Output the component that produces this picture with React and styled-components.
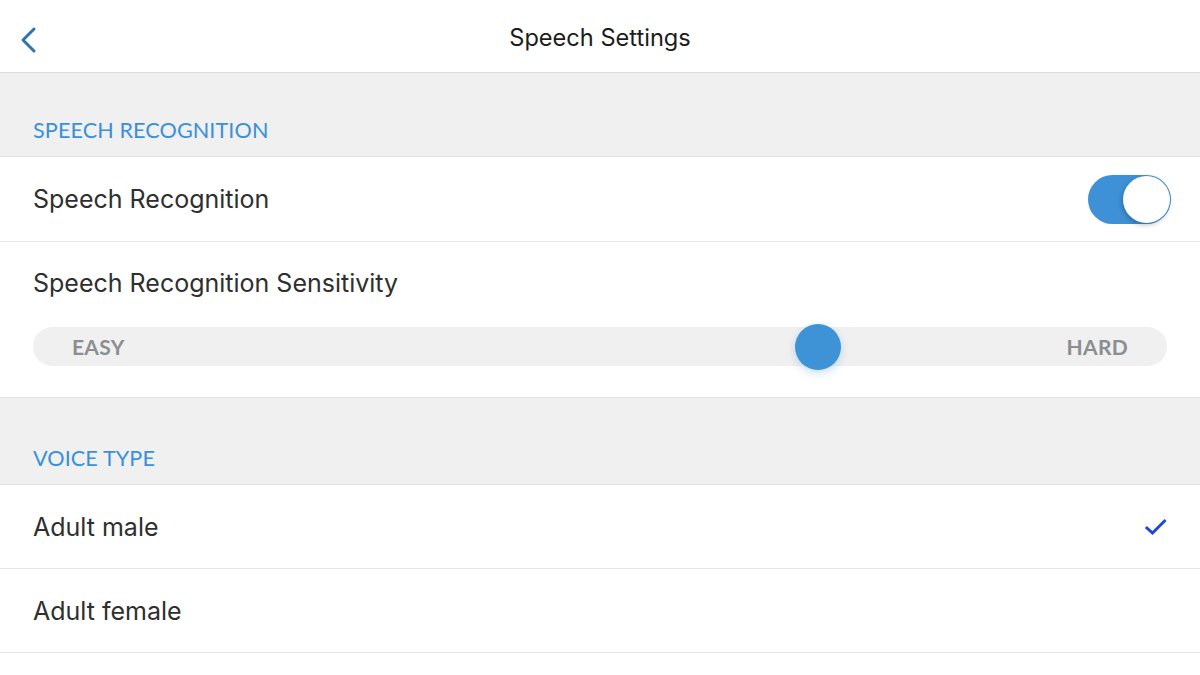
import React from "react";
import styled, { createGlobalStyle } from "styled-components";

const GlobalStyle = createGlobalStyle`
  html, body {
    margin: 0;
    padding: 0;
    background: #ffffff;
    font-family: Inter, "Open Sans", sans-serif;
  }
`;

const Page = styled.div`
  width: 1200px;
  height: 675px;
  background: #ffffff;
  overflow: hidden;
`;

const Header = styled.header`
  height: 73px;
  box-sizing: border-box;
  display: flex;
  align-items: center;
  justify-content: center;
  position: relative;
  border-bottom: 1px solid #dcdcdc;
  h1 {
    margin: 3px 0 0;
    font-size: 23.6px;
    font-weight: 400;
    color: #1c1c1c;
  }
`;

const BackButton = styled.button`
  position: absolute;
  left: 14px;
  top: 24px;
  width: 28px;
  height: 32px;
  padding: 0;
  border: none;
  background: none;
  display: flex;
  align-items: center;
  justify-content: center;
  cursor: pointer;
`;

const SectionHeader = styled.div`
  height: ${(p) => p.$height || 84}px;
  background: #f0f0f0;
  display: flex;
  align-items: flex-end;
  padding: 0 0 15px 33px;
  box-sizing: border-box;
  border-bottom: 1px solid #e2e2e2;
  font-family: Lato, "Open Sans", sans-serif;
  font-size: 21.6px;
  line-height: 22px;
  color: #3a91d8;
  letter-spacing: 0.1px;
`;

const Row = styled.div`
  height: ${(p) => p.$height || 84}px;
  display: flex;
  align-items: center;
  justify-content: space-between;
  padding: 0 30px 0 33px;
  box-sizing: border-box;
  border-bottom: 1px solid #e6e6e6;
  font-size: 25px;
  line-height: 28px;
  color: #2f2f2f;
`;

const SliderBlock = styled.div`
  height: 156px;
  box-sizing: border-box;
  padding: 27px 33px 0;
  border-bottom: 1px solid #e2e2e2;
  font-size: 25px;
  line-height: 28px;
  color: #2f2f2f;
`;

const Track = styled.div`
  margin-top: 30px;
  height: 39px;
  border-radius: 20px;
  background: #f0f0f0;
  display: flex;
  align-items: center;
  justify-content: space-between;
  padding: 0 39px;
  position: relative;
  font-family: Lato, "Open Sans", sans-serif;
  font-weight: 700;
  font-size: 21px;
  color: #8b8e92;
  letter-spacing: 0.3px;
`;

const Thumb = styled.div`
  position: absolute;
  top: 50%;
  width: 46px;
  height: 46px;
  margin-left: -23px;
  margin-top: -23px;
  border-radius: 50%;
  background: #3e93d6;
  box-shadow: 0 3px 8px rgba(62, 147, 214, 0.3);
`;

const Toggle = styled.div`
  width: 83px;
  height: 49px;
  border-radius: 25px;
  background: #3e91d6;
  position: relative;
  margin-right: -1px;
  &::after {
    content: "";
    position: absolute;
    right: 1px;
    top: 1px;
    width: 47px;
    height: 47px;
    border-radius: 50%;
    background: #ffffff;
    box-shadow: -1px 2px 5px rgba(0, 0, 0, 0.25);
  }
`;

const Check = () => (
  <svg width="22" height="18" viewBox="0 0 22 18" style={{ marginRight: 3 }}>
    <path d="M2 10 L7.5 15 L19.5 3" fill="none" stroke="#1a48d8" strokeWidth="2.9" strokeLinecap="square" />
  </svg>
);

const App = () => {
  const sensitivity = 0.692;
  return (
    <Page>
      <GlobalStyle />
      <Header>
        <BackButton aria-label="Back">
          <svg width="18" height="28" viewBox="0 0 18 28">
            <path d="M15 3 L4 14 L15 25" fill="none" stroke="#2f73b3" strokeWidth="3" strokeLinecap="round" strokeLinejoin="round" />
          </svg>
        </BackButton>
        <h1>Speech Settings</h1>
      </Header>
      <SectionHeader>SPEECH RECOGNITION</SectionHeader>
      <Row $height={85}>
        <span>Speech Recognition</span>
        <Toggle />
      </Row>
      <SliderBlock>
        <div>Speech Recognition Sensitivity</div>
        <Track>
          <span>EASY</span>
          <Thumb style={{ left: `${sensitivity * 100}%` }} />
          <span>HARD</span>
        </Track>
      </SliderBlock>
      <SectionHeader $height={87}>VOICE TYPE</SectionHeader>
      <Row>
        <span>Adult male</span>
        <Check />
      </Row>
      <Row>
        <span>Adult female</span>
      </Row>
    </Page>
  );
};

export default App;
